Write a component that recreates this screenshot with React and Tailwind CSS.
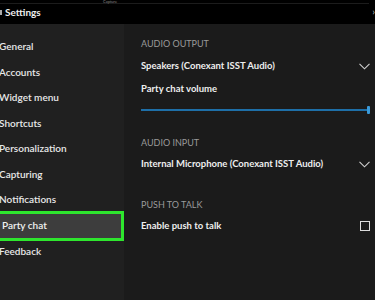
import React from 'react';

const navItems = [
  'General',
  'Accounts',
  'Widget menu',
  'Shortcuts',
  'Personalization',
  'Capturing',
  'Notifications',
  'Party chat',
  'Feedback',
];

const Chevron = () => (
  <svg width="11" height="7" viewBox="0 0 11 7" fill="none" stroke="#d0d0d0" strokeWidth="1.1">
    <path d="M0.5 0.8 L5.5 5.8 L10.5 0.8" />
  </svg>
);

export default function App() {
  return (
    <div
      className="w-[375px] h-[300px] overflow-hidden bg-[#1b1b1b] text-white flex flex-col"
      style={{ fontFamily: 'Lato, "Liberation Sans", sans-serif' }}
    >
      {/* barra superior */}
      <div className="h-[24px] bg-black relative flex items-center shrink-0">
        <div className="absolute top-[3px] left-0 right-[6px] h-px bg-[#1c1c1c]" />
        <span className="absolute top-[-1px] left-[103px] text-[4px] text-[#888]">Capture</span>
        <div className="w-[2px] h-[5px] bg-[#aaa] mr-[3px]" />
        <span className="text-[10px] font-bold text-[#eee]">Settings</span>
        <span className="absolute right-[0px] top-[6px] text-[10px] text-[#bbb] leading-none">›</span>
      </div>

      <div className="flex flex-1">
        {/* menu lateral */}
        <div className="w-[124px] bg-[#202020] pt-[10px] shrink-0">
          {navItems.map((item) =>
            item === 'Party chat' ? (
              <div
                key={item}
                className="h-[30px] -mt-[2px] mb-[-2px] border-[3px] border-[#2ee62e] bg-[#3d3d3d] flex items-center text-[10px] font-semibold text-[#f0f0f0] -ml-[3px] pl-[2px]"
              >
                {item}
              </div>
            ) : (
              <div key={item} className="h-[25.5px] flex items-center text-[10px] font-semibold text-[#e8e8e8] -ml-[1px]">
                {item}
              </div>
            )
          )}
        </div>

        {/* contenido */}
        <div className="flex-1 pl-[17px] pr-[5px] pt-[14px]">
          <div className="text-[9px] text-[#9a9a9a] h-[12px] leading-[12px]">AUDIO OUTPUT</div>
          <div className="flex items-center justify-between mt-[10px] h-[12px]">
            <span className="text-[9.5px] text-[#eee] font-bold">Speakers (Conexant ISST Audio)</span>
            <Chevron />
          </div>
          <div className="text-[9.5px] text-[#eee] font-bold mt-[11px] h-[12px] leading-[12px]">Party chat volume</div>
          <div className="relative mt-[11px] h-[8px] flex items-center">
            <div className="h-[2px] w-full bg-[#1e6fa8]" />
            <div className="absolute right-[0px] top-0 w-[3px] h-[8px] bg-[#3a9ad9] rounded-[1px]" />
          </div>

          <div className="text-[9px] text-[#9a9a9a] mt-[23px] h-[12px] leading-[12px]">AUDIO INPUT</div>
          <div className="flex items-center justify-between mt-[9px] h-[12px]">
            <span className="text-[9.5px] text-[#eee] font-bold">Internal Microphone (Conexant ISST Audio)</span>
            <Chevron />
          </div>

          <div className="text-[9px] text-[#9a9a9a] mt-[29px] h-[12px] leading-[12px]">PUSH TO TALK</div>
          <div className="flex items-center justify-between mt-[9px] h-[12px]">
            <span className="text-[9.5px] text-[#eee] font-bold">Enable push to talk</span>
            <div className="w-[10px] h-[10px] border border-[#ddd]" />
          </div>
        </div>
      </div>
    </div>
  );
}
